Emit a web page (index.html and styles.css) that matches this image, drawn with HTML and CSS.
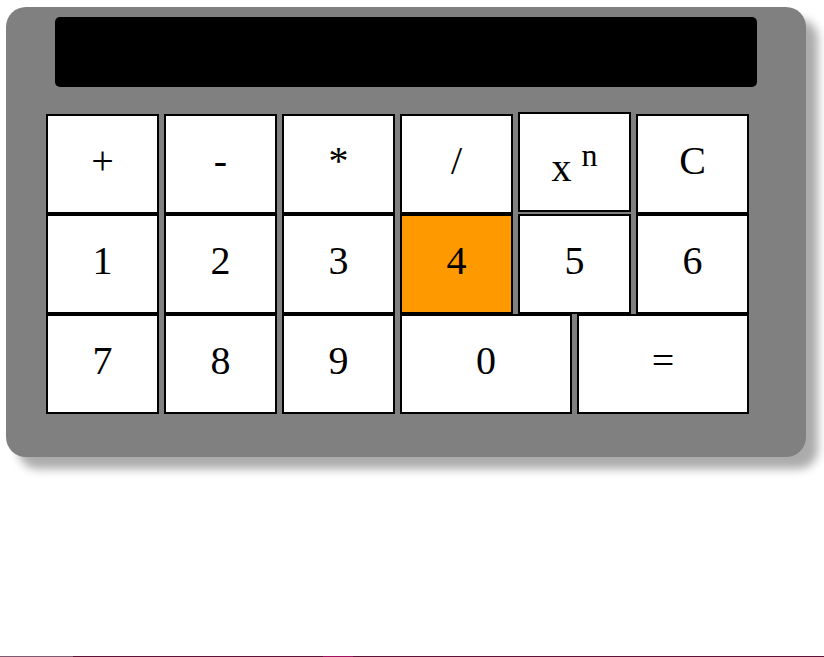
FILE: index.html
```html
<!DOCTYPE html>
<html>
<head>
<meta charset="utf-8">
<title>Calculator</title>
<link rel="stylesheet" href="styles.css">
</head>
<body>
<div class="page">
  <div class="calc">
    <div class="display"></div>
    <div class="keys">
      <div class="row">
        <div class="key">+</div>
        <div class="key">-</div>
        <div class="key">*</div>
        <div class="key">/</div>
        <div class="key pow">x <sup>n</sup></div>
        <div class="key">C</div>
      </div>
      <div class="row">
        <div class="key">1</div>
        <div class="key">2</div>
        <div class="key">3</div>
        <div class="key active">4</div>
        <div class="key">5</div>
        <div class="key">6</div>
      </div>
      <div class="row">
        <div class="key">7</div>
        <div class="key">8</div>
        <div class="key">9</div>
        <div class="key wide">0</div>
        <div class="key wide">=</div>
      </div>
    </div>
  </div>
  <div class="strip"></div>
</div>
</body>
</html>
```
FILE: styles.css
```css
html, body {
  margin: 0;
  padding: 0;
  background: #ffffff;
}

body {
  font-family: "Liberation Serif", "Times New Roman", serif;
  color: #000000;
}

.page {
  height: 657px;
  display: flex;
  flex-direction: column;
  box-sizing: border-box;
  padding: 7px 0 0 6px;
}

.calc {
  width: 800px;
  height: 450px;
  box-sizing: border-box;
  background: #808080;
  border-radius: 20px;
  box-shadow: 12px 12px 10px rgba(0, 0, 0, 0.33);
  padding-top: 10px;
  flex: none;
}

.display {
  width: 702px;
  height: 70px;
  margin: 0 auto;
  background: #000000;
  border-radius: 5px;
}

.keys {
  margin: 27px 0 0 40px;
  display: flex;
  flex-direction: column;
}

.row {
  display: flex;
  gap: 5px;
  align-items: flex-start;
  height: 100px;
}

.key {
  width: 113px;
  height: 100px;
  box-sizing: border-box;
  border: 2px solid #000000;
  background: #ffffff;
  font-size: 40px;
  line-height: 1;
  display: flex;
  align-items: center;
  justify-content: center;
  padding-bottom: 6px;
  flex: none;
}

.key.wide {
  width: 172px;
}

.key.active {
  background: #ff9900;
}

.key.pow {
  margin-top: -2px;
  padding-top: 12px;
  padding-bottom: 0;
}

.key.pow sup {
  font-size: 32px;
  line-height: 1;
  position: relative;
  top: -13px;
  margin-left: 10px;
}

.strip {
  margin-top: auto;
  height: 1px;
  flex: none;
  margin-left: -6px;
  background: linear-gradient(to right,
    #7d5a70 0, #7d5a70 73px,
    #5c1236 73px, #5c1236 323px,
    #a0125f 323px, #a0125f 353px,
    #5c1236 353px, #5c1236 100%);
}
```
